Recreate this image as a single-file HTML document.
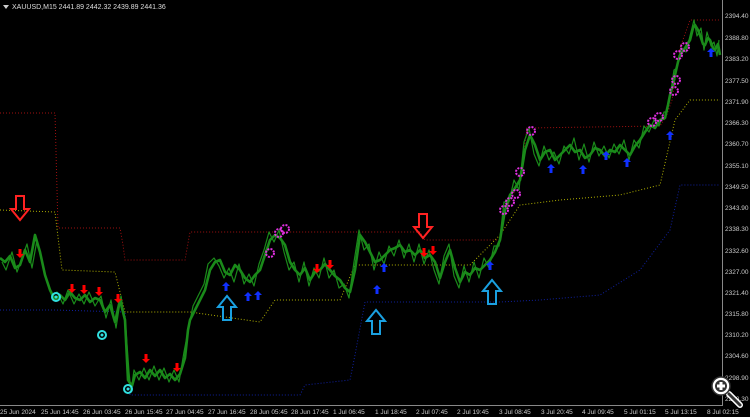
<!DOCTYPE html>
<html><head><style>
html,body{margin:0;padding:0;background:#000;width:750px;height:417px;overflow:hidden;font-family:"Liberation Sans",sans-serif}
</style></head><body>
<svg width="750" height="417" viewBox="0 0 750 417" xmlns="http://www.w3.org/2000/svg" font-family="Liberation Sans, sans-serif">
<defs>
<g id="rd"><path d="M0 5 L-4 1 L-1.5 1 L-1.5 -4 L1.5 -4 L1.5 1 L4 1 Z" fill="#f00"/></g>
<g id="bu"><path d="M0 -5 L-4 -1 L-1.5 -1 L-1.5 4 L1.5 4 L1.5 -1 L4 -1 Z" fill="#1030ff"/></g>
<g id="mc"><circle r="4" fill="none" stroke="#e030e0" stroke-width="2" stroke-dasharray="2 1.2"/></g>
<g id="cc"><circle r="4" fill="none" stroke="#30e0e0" stroke-width="2"/><circle r="1.5" fill="#30e0e0"/></g>
<g id="BD"><path d="M-4 -16 L4 -16 L4 -3 L9 -3 L0 8 L-9 -3 L-4 -3 Z" fill="none" stroke="#f22" stroke-width="2"/></g>
<g id="CU"><path d="M-4 14 L4 14 L4 1 L9 1 L0 -10 L-9 1 L-4 1 Z" fill="none" stroke="#1aa0e0" stroke-width="2"/></g>
</defs>
<rect x="0" y="0" width="750" height="417" fill="#000"/>
<line x1="722.5" y1="0" x2="722.5" y2="405" stroke="#888"/>
<line x1="0" y1="405.5" x2="723" y2="405.5" stroke="#888"/>
<polyline fill="none" stroke="#a01010" stroke-width="1" stroke-dasharray="1 2" points="0,113 55,113 58,228 120,228 123,245 125,260 185,260 190,232 420,232 425,240 500,240 503,215 520,180 527,128 660,126 666,117 672,100 680,48 690,20 720,20"/>
<polyline fill="none" stroke="#b0b000" stroke-width="1" stroke-dasharray="1 2" points="0,210 55,212 62,270 115,272 125,312 190,312 260,322 275,300 340,300 355,265 470,265 500,235 520,205 560,200 620,195 660,185 675,120 690,100 720,100"/>
<polyline fill="none" stroke="#1020a0" stroke-width="1" stroke-dasharray="1 2" points="0,310 55,310 125,312 130,395 300,395 305,385 350,380 355,355 365,302 500,302 540,300 600,295 640,270 670,230 680,185 720,185"/>
<g fill="none" stroke="#1a8a1a" stroke-linejoin="round">
<polyline stroke-width="2.6" points="0,258 5,262 10,256 15,268 20,265 25,250 30,262 35,235 40,252 45,275 50,290 55,300 60,295 65,300 70,292 75,298 80,300 85,295 90,302 95,298 100,300 105,312 110,305 115,322 120,300 125,320 127,360 128,380 132,386 135,375 140,372 145,378 150,370 155,376 160,370 165,378 170,374 175,380 180,374 185,358 188,330 190,320 195,310 200,300 205,290 210,270 215,262 220,260 225,272 230,275 235,265 240,270 245,278 250,282 255,275 260,270 265,255 270,240 275,235 280,238 285,245 290,262 295,270 300,275 305,268 310,280 315,272 320,270 325,264 330,270 335,276 340,280 345,288 350,292 355,270 360,235 365,242 370,252 375,262 380,260 385,255 390,250 395,248 400,245 405,252 410,250 415,255 420,250 425,258 430,255 435,262 440,278 445,262 450,250 455,268 460,282 465,272 470,275 475,268 480,270 485,265 490,260 495,252 500,240 505,210 510,195 515,188 520,180 525,150 530,135 535,145 540,160 545,152 550,150 555,160 560,155 565,150 570,145 575,152 580,150 585,158 590,155 595,148 600,150 605,156 610,150 615,152 620,145 625,150 630,155 635,146 640,140 645,132 650,125 655,128 660,120 665,118 668,105 670,95 673,85 675,75 678,62 680,55 685,48 690,40 693,28 695,25 698,30 700,35 703,44 705,45 708,38 710,40 713,48 715,50 718,44 720,55"/>
<polyline stroke-width="1.2" points="2,262 6,270 12,252 17,272 22,258 27,244 32,268 37,240 42,260 47,282 52,296 57,292 63,304 68,290 74,304 79,294 84,304 89,292 95,306 101,296 106,318 111,300 116,328 121,296 126,330 129,372 131,392 134,370 139,380 144,368 149,380 154,366 159,380 164,368 169,382 174,370 179,382 184,352 189,326 193,306 198,296 204,284 208,264 214,258 219,266 224,278 229,268 234,282 239,264 244,284 249,274 254,286 259,264 264,250 269,232 274,242 279,230 284,252 289,270 294,262 299,282 304,262 309,286 314,268 319,278 324,258 329,278 334,270 339,288 344,284 349,298 354,262 359,230 364,250 369,244 374,270 379,252 384,264 389,246 394,256 399,240 404,258 409,244 414,262 419,244 424,264 429,250 434,270 439,284 444,256 449,244 454,276 459,288 464,266 469,282 474,262 479,278 484,258 489,268 494,246 499,246 504,202 509,202 514,180 519,190 524,142 529,128 534,154 539,166 544,146 549,160 554,152 559,164 564,146 569,154 574,138 579,160 584,144 589,162 594,142 599,156 604,146 609,158 614,144 619,154 624,140 629,160 634,140 639,148 644,126 649,132 654,120 659,126 664,112 667,112 671,90 674,70 677,68 681,48 686,52 691,32 694,20 697,36 701,28 704,50 707,32 711,46 714,42 717,56 719,40"/>
</g>
<use href="#BD" x="20" y="212"/>
<use href="#BD" x="423" y="230"/>
<use href="#CU" x="227" y="306"/>
<use href="#CU" x="376" y="320"/>
<use href="#CU" x="492" y="290"/>
<use href="#rd" x="20" y="253"/>
<use href="#rd" x="72" y="288"/>
<use href="#rd" x="84" y="289"/>
<use href="#rd" x="99" y="291"/>
<use href="#rd" x="118" y="298"/>
<use href="#rd" x="146" y="358"/>
<use href="#rd" x="177" y="367"/>
<use href="#rd" x="317" y="268"/>
<use href="#rd" x="330" y="264"/>
<use href="#rd" x="424" y="252"/>
<use href="#rd" x="433" y="250"/>
<use href="#bu" x="226" y="287"/>
<use href="#bu" x="248" y="297"/>
<use href="#bu" x="258" y="296"/>
<use href="#bu" x="377" y="290"/>
<use href="#bu" x="384" y="268"/>
<use href="#bu" x="490" y="266"/>
<use href="#bu" x="551" y="169"/>
<use href="#bu" x="583" y="170"/>
<use href="#bu" x="606" y="156"/>
<use href="#bu" x="627" y="163"/>
<use href="#bu" x="670" y="136"/>
<use href="#bu" x="711" y="53"/>
<use href="#mc" x="270" y="253"/>
<use href="#mc" x="279" y="233"/>
<use href="#mc" x="285" y="229"/>
<use href="#mc" x="504" y="210"/>
<use href="#mc" x="510" y="202"/>
<use href="#mc" x="516" y="194"/>
<use href="#mc" x="520" y="172"/>
<use href="#mc" x="531" y="131"/>
<use href="#mc" x="652" y="122"/>
<use href="#mc" x="659" y="117"/>
<use href="#mc" x="674" y="91"/>
<use href="#mc" x="676" y="80"/>
<use href="#mc" x="678" y="55"/>
<use href="#mc" x="685" y="47"/>
<use href="#cc" x="56" y="297"/>
<use href="#cc" x="102" y="335"/>
<use href="#cc" x="128" y="389"/>
<path d="M3 5 L9 5 L6 9 Z" fill="#ccc"/>
<text x="12" y="9" fill="#ddd" font-size="7">XAUUSD,M15  2441.89 2442.32 2439.89 2441.36</text>
<g fill="#ccc" font-size="6.5">
<text x="725" y="18">2394.40</text><text x="725" y="40">2388.80</text><text x="725" y="61">2383.20</text><text x="725" y="83">2377.50</text><text x="725" y="104">2371.90</text><text x="725" y="125">2366.30</text><text x="725" y="146">2360.70</text><text x="725" y="168">2355.10</text><text x="725" y="189">2349.50</text><text x="725" y="210">2343.90</text><text x="725" y="231">2338.30</text><text x="725" y="253">2332.60</text><text x="725" y="274">2327.00</text><text x="725" y="295">2321.40</text><text x="725" y="316">2315.80</text><text x="725" y="337">2310.20</text><text x="725" y="358">2304.60</text><text x="725" y="380">2298.90</text><text x="725" y="401">2293.30</text>
</g>
<g fill="#ccc" font-size="6.5">
<text x="0" y="414">25 Jun 2024</text><text x="41" y="414">25 Jun 14:45</text><text x="83" y="414">26 Jun 03:45</text><text x="125" y="414">26 Jun 15:45</text><text x="166" y="414">27 Jun 04:45</text><text x="208" y="414">27 Jun 16:45</text><text x="250" y="414">28 Jun 05:45</text><text x="291" y="414">28 Jun 17:45</text><text x="333" y="414">1 Jul 06:45</text><text x="375" y="414">1 Jul 18:45</text><text x="416" y="414">2 Jul 07:45</text><text x="457" y="414">2 Jul 19:45</text><text x="499" y="414">3 Jul 08:45</text><text x="541" y="414">3 Jul 20:45</text><text x="582" y="414">4 Jul 09:45</text><text x="624" y="414">5 Jul 01:15</text><text x="665" y="414">5 Jul 13:15</text><text x="707" y="414">8 Jul 02:15</text>
</g>
<g>
<line x1="729" y1="394" x2="740" y2="405" stroke="#fff" stroke-width="6" stroke-linecap="round"/>
<line x1="729" y1="394" x2="740" y2="405" stroke="#333" stroke-width="3" stroke-linecap="round"/>
<circle cx="721" cy="386" r="9" fill="#fff" stroke="#333" stroke-width="1.5"/>
<circle cx="721" cy="386" r="6" fill="#333"/>
<rect x="719.5" y="382" width="3" height="8" fill="#fff"/><rect x="717" y="384.5" width="8" height="3" fill="#fff"/>
</g>
</svg>
</body></html>
